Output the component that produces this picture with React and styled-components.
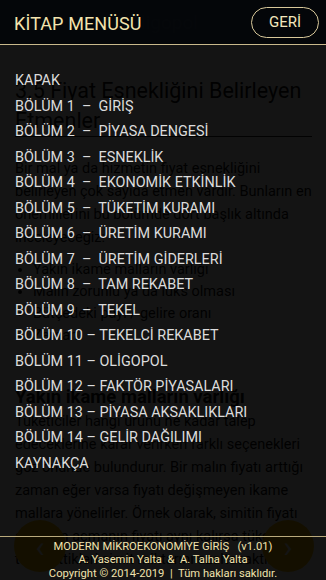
import React from "react";
import styled, { createGlobalStyle } from "styled-components";

const GlobalStyle = createGlobalStyle`
    html, body {
        margin: 0;
        padding: 0;
        background: #ffffff;
        font-family: Roboto, "Liberation Sans", sans-serif;
        overflow: hidden;
    }
`;

const Page = styled.div`
    width: 326px;
    height: 580px;
    position: relative;
    overflow: hidden;
    background: #ffffff;
`;

const AppBar = styled.header`
    height: 45px;
    background: #263238;
    color: #ffffff;
    display: flex;
    align-items: center;
    padding-left: 128px;
    font-size: 19px;
`;

const Content = styled.main`
    padding: 31px 14px 0 15px;
    color: #111111;
    font-size: 14.5px;
    line-height: 23px;
`;

const Heading = styled.h1`
    margin: 0;
    font-size: 21.5px;
    font-weight: 400;
    line-height: 30px;
    border-bottom: 1px solid #222;
`;

const Para = styled.p`
    margin: ${(p) => (p.$tight ? "0" : "20px")} 0 0 0;
`;

const Bullets = styled.ul`
    margin: 10px 0 0 0;
    padding-left: 18px;
    line-height: 22px;
`;

const SubHeading = styled.h2`
    margin: 37px 0 0 0;
    font-size: 18.5px;
    font-weight: 700;
    line-height: 26px;
`;

const FloatButton = styled.div`
    position: absolute;
    bottom: 8px;
    ${(p) => (p.$side === "left" ? "left: 14px;" : "right: 12px;")}
    width: 52px;
    height: 52px;
    border-radius: 50%;
    background: #ffc107;
    color: #ffffff;
    display: flex;
    align-items: center;
    justify-content: center;
    font-size: 30px;
`;

const Overlay = styled.div`
    position: absolute;
    inset: 0;
    display: flex;
    flex-direction: column;
    background: rgba(0, 0, 0, 0.92);
`;

const MenuHeader = styled.div`
    height: 44px;
    flex-shrink: 0;
    display: flex;
    align-items: center;
    justify-content: space-between;
    padding: 0 7px 0 14px;
    background: rgba(4, 6, 10, 0.93);
    border-bottom: 1px solid #c9b98c;
`;

const MenuTitle = styled.div`
    color: #f3e3ad;
    font-size: 18px;
    letter-spacing: 0.1px;
    margin-top: 2px;
`;

const BackButton = styled.button`
    width: 68px;
    height: 31px;
    border-radius: 16px;
    border: 1px solid #d8c89a;
    background: transparent;
    color: #f3e6bd;
    font-family: Roboto, "Liberation Sans", sans-serif;
    font-size: 15px;
    padding: 0;
`;

const MenuList = styled.nav`
    flex: 1;
    padding: 23px 0 0 15px;
`;

const MenuItem = styled.div`
    color: #dcdcdc;
    font-size: 14.4px;
    line-height: 25.5px;
    white-space: pre;
`;

const MenuFooter = styled.footer`
    height: 44px;
    flex-shrink: 0;
    box-sizing: border-box;
    padding-top: 3px;
    border-top: 1px solid #b9aa7c;
    display: flex;
    flex-direction: column;
    align-items: center;
    justify-content: center;
    color: #f1e2ad;
    font-size: 11.2px;
    line-height: 13.5px;
    white-space: pre;
`;

const items = [
    "KAPAK",
    "BÖLÜM 1  –  GİRİŞ",
    "BÖLÜM 2  –  PİYASA DENGESİ",
    "BÖLÜM 3  –  ESNEKLİK",
    "BÖLÜM 4  –  EKONOMİK ETKİNLİK",
    "BÖLÜM 5  –  TÜKETİM KURAMI",
    "BÖLÜM 6  –  ÜRETİM KURAMI",
    "BÖLÜM 7  –  ÜRETİM GİDERLERİ",
    "BÖLÜM 8  –  TAM REKABET",
    "BÖLÜM 9  –  TEKEL",
    "BÖLÜM 10 – TEKELCİ REKABET",
    "BÖLÜM 11 – OLİGOPOL",
    "BÖLÜM 12 – FAKTÖR PİYASALARI",
    "BÖLÜM 13 – PİYASA AKSAKLIKLARI",
    "BÖLÜM 14 – GELİR DAĞILIMI",
    "KAYNAKÇA",
];

export default function App() {
    return (
        <Page>
            <GlobalStyle />
            <AppBar>Oligopol</AppBar>
            <Content>
                <Heading>3.5 Fiyat Esnekliğini Belirleyen Etmenler</Heading>
                <Para>
                    Bir mal ya da hizmetin fiyat esnekliğini belirleyen çok sayıda etmen vardır. Bunların en
                    önemlilerini bu bölümde dört başlık altında inceleyeceğiz:
                </Para>
                <Bullets>
                    <li>Yakın ikame malların varlığı</li>
                    <li>Malın zorunlu ya da lüks olması</li>
                    <li>Bütçedeki payı / gelire oranı</li>
                    <li>Zaman</li>
                </Bullets>
                <SubHeading>Yakın ikame malların varlığı</SubHeading>
                <Para $tight>
                    Tüketiciler hangi ürünü ne kadar talep edeceklerine karar verirken farklı seçenekleri
                    göz önünde bulundurur. Bir malın fiyatı arttığı zaman eğer varsa fiyatı değişmeyen ikame
                    mallara yönelirler. Örnek olarak, simitin fiyatı artarken açmanın fiyatı aynı kalırsa tüketiciler
                    talep ettikleri simit miktarını azaltacaktır.
                </Para>
            </Content>
            <FloatButton $side="left">‹</FloatButton>
            <FloatButton $side="right">›</FloatButton>

            <Overlay>
                <MenuHeader>
                    <MenuTitle>KİTAP MENÜSÜ</MenuTitle>
                    <BackButton>GERİ</BackButton>
                </MenuHeader>
                <MenuList>
                    {items.map((t) => (
                        <MenuItem key={t}>{t}</MenuItem>
                    ))}
                </MenuList>
                <MenuFooter>
                    <div>MODERN MİKROEKONOMİYE GİRİŞ   (v1.01)</div>
                    <div>A. Yasemin Yalta  &  A. Talha Yalta</div>
                    <div>Copyright © 2014-2019  |  Tüm hakları saklıdır.</div>
                </MenuFooter>
            </Overlay>
        </Page>
    );
}
